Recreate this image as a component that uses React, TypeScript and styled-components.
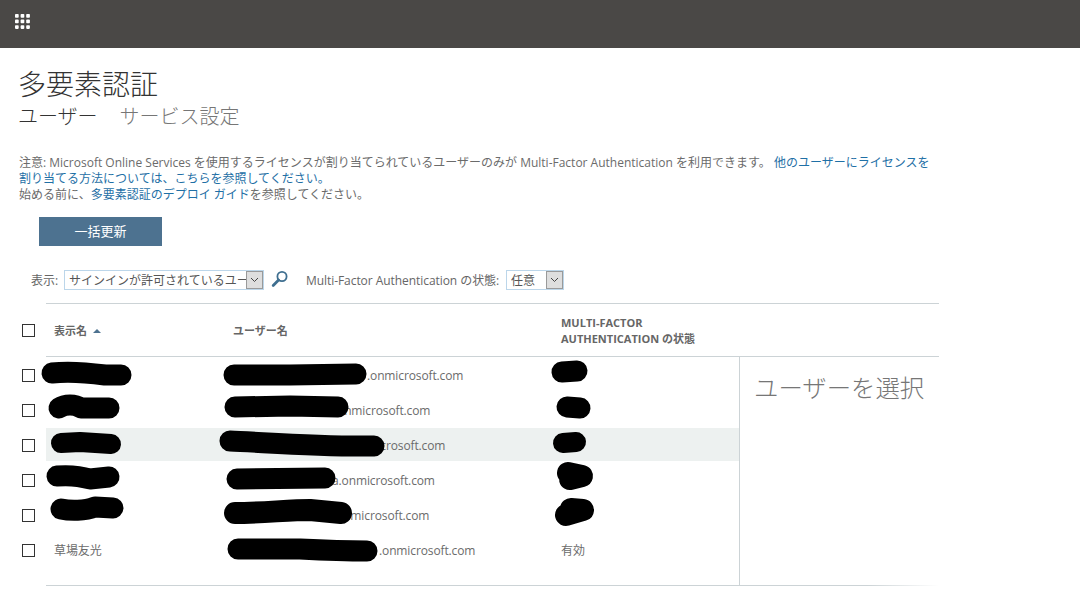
import React from "react";
import styled, { createGlobalStyle } from "styled-components";

const GlobalStyle = createGlobalStyle`
  html, body { margin: 0; padding: 0; background: #fff; overflow: hidden; }
  body { font-family: "Open Sans", "Noto Sans CJK JP", sans-serif; font-size: 12px; color: #666; }
`;

const Page = styled.div`
  position: relative;
  width: 1080px;
  height: 595px;
  overflow: hidden;
`;

const TopBar = styled.header`
  box-sizing: border-box;
  height: 48px;
  background: #4a4846;
  display: flex;
  align-items: flex-start;
  padding: 14px 0 0 15px;
`;

const Main = styled.main`
  padding: 18px 0 0 19px;
`;

const Title = styled.h1`
  margin: 0 0 0 -1px;
  font-size: 28px;
  line-height: 36px;
  font-weight: 300;
  color: #333;
`;

const Tabs = styled.nav`
  display: flex;
  gap: 22px;
  height: 28px;
  margin-left: -1px;
  padding-top: 1px;
`;

const Tab = styled.a<{ $active?: boolean }>`
  font-size: 20px;
  line-height: 28px;
  font-weight: 300;
  color: ${(p) => (p.$active ? "#333" : "#767676")};
`;

const Note = styled.div`
  margin-top: 24px;
  line-height: 16px;
  white-space: nowrap;
  color: #6b6b6b;
`;

const NoteLine = styled.div``;

const Link = styled.a`
  color: #1f70a6;
`;

const BulkButton = styled.button`
  display: block;
  margin: 14px 0 0 20px;
  width: 123px;
  height: 29px;
  border: 0;
  padding: 0 0 2px;
  background: #4d7290;
  color: #fff;
  font-family: inherit;
  font-size: 13px;
`;

const FilterRow = styled.div`
  display: flex;
  align-items: center;
  height: 20px;
  margin-top: 24px;
  padding-left: 12px;
`;

const FilterLabel = styled.span<{ $gap: number }>`
  margin-right: ${(p) => p.$gap}px;
  white-space: nowrap;
  letter-spacing: -0.06px;
`;

const Dropdown = styled.div<{ $width: number }>`
  box-sizing: border-box;
  width: ${(p) => p.$width}px;
  height: 20px;
  display: flex;
  align-items: center;
  border: 1px solid #bcd6ea;
  padding-left: 4px;
  color: #555;
  white-space: nowrap;
`;

const DropdownText = styled.span`
  flex: 1;
  min-width: 0;
  overflow: hidden;
`;

const DropdownArrow = styled.span`
  flex: none;
  box-sizing: border-box;
  width: 17px;
  height: 18px;
  display: flex;
  align-items: center;
  justify-content: center;
  background: #dedede;
  border: 1px solid #9a9a9a;
`;

const SearchButton = styled.span`
  display: flex;
  width: 18px;
  height: 18px;
  margin: -3px 17px 0 7px;
`;

const HeaderRow = styled.div`
  display: flex;
  margin-top: 13px;
`;

const CheckSlot = styled.div<{ $nudge?: boolean }>`
  flex: none;
  width: 27px;
  display: flex;
  align-items: center;
  padding-left: 3px;
  padding-top: ${(p) => (p.$nudge ? 2 : 0)}px;
  box-sizing: border-box;
`;

const Check = styled.span`
  display: block;
  box-sizing: border-box;
  width: 13px;
  height: 13px;
  border: 1px solid #333;
  background: #fff;
`;

const HeaderCells = styled.div`
  box-sizing: border-box;
  width: 893px;
  height: 54px;
  padding-top: 2px;
  display: flex;
  align-items: center;
  border-top: 1px solid #ccd3d6;
  border-bottom: 1px solid #ccd3d6;
`;

const HeaderCell = styled.div<{ $width: number }>`
  width: ${(p) => p.$width}px;
  padding-left: 8px;
  box-sizing: border-box;
  font-size: 11px;
  line-height: 16px;
  font-weight: 700;
  color: #666;
`;

const SortArrow = styled.span`
  display: inline-block;
  vertical-align: 2px;
  margin-left: 3px;
  width: 0;
  height: 0;
  border-left: 4px solid transparent;
  border-right: 4px solid transparent;
  border-bottom: 4px solid #4d7290;
`;

const Body = styled.div`
  display: flex;
  height: 228px;
`;

const RowList = styled.div`
  flex: none;
  width: 720px;
  padding-top: 1px;
  display: flex;
  flex-direction: column;
  gap: 2px;
`;

const Row = styled.div`
  display: flex;
  height: 33px;
`;

const RowCells = styled.div<{ $selected?: boolean }>`
  flex: 1;
  display: flex;
  align-items: center;
  padding-top: 2px;
  box-sizing: border-box;
  background: ${(p) => (p.$selected ? "#edf1f0" : "transparent")};
`;

const Cell = styled.div<{ $width: number; $lead?: number }>`
  width: ${(p) => p.$width}px;
  box-sizing: border-box;
  padding-left: ${(p) => 8 + (p.$lead ?? 0)}px;
  white-space: nowrap;
  line-height: 16px;
  letter-spacing: -0.12px;
  color: #6b6b6b;
`;

const DetailPane = styled.aside`
  box-sizing: border-box;
  width: 200px;
  border-left: 1px solid #ccd3d6;
  padding: 15px 0 0 14px;
  font-size: 24.4px;
  line-height: 32px;
  font-weight: 300;
  color: #767676;
`;

const BottomRule = styled.div`
  margin-left: 27px;
  width: 893px;
  height: 1px;
  background: linear-gradient(to right, #ccd3d6 92%, #fff 100%);
`;

const Redactions = styled.svg`
  position: absolute;
  inset: 0;
  pointer-events: none;
`;

const AppGrid = () => (
  <svg width="15" height="15" viewBox="0 0 15 15" fill="#fff">
    {[0, 5.6, 11.2].flatMap((y) =>
      [0, 5.6, 11.2].map((x) => <rect key={`${x}-${y}`} x={x} y={y} width="3.7" height="3.7" rx="0.8" />)
    )}
  </svg>
);

const Chevron = () => (
  <svg width="9" height="6" viewBox="0 0 9 6" fill="none" stroke="#444" strokeWidth="1">
    <path d="M1 1l3.5 3.5L8 1" />
  </svg>
);

const Lens = () => (
  <svg width="18" height="18" viewBox="0 0 18 18" fill="none" stroke="#3f6f90">
    <circle cx="11" cy="6.5" r="4.6" strokeWidth="1.8" />
    <path d="M7.6 10L2.2 15.4" strokeWidth="2.8" strokeLinecap="round" />
  </svg>
);

const strokes: Array<[string, number]> = [
  ["M52 373C70 371 90 373 105 375L121 375", 21],
  ["M59 408C65 404 75 404 81 408L109 408", 21],
  ["M61 443L80 442L111 444", 20],
  ["M57 476C70 475 80 476 90 479L109 477", 21],
  ["M61 509C70 511 85 511 95 507L113 508", 21],
  ["M234 375L290 375L356 374", 21],
  ["M235 407L290 406L338 407", 21],
  ["M230 441C260 442 320 447 374 446", 21],
  ["M237 479L325 478", 21],
  ["M235 513C260 513 290 510 310 510L341 513", 22],
  ["M238 549L300 549C320 550 340 551 367 551", 21],
  ["M562 372L577 371", 21],
  ["M567 407L580 408", 21],
  ["M563 443L576 442", 20],
  ["M568 473L582 476L570 479", 22],
  ["M571 509L583 510L566 515", 22],
];

type UserRow = { name?: string; email: string; lead: number; status?: string; selected?: boolean };

const rows: UserRow[] = [
  { email: ".onmicrosoft.com", lead: 134 },
  { email: ".onmicrosoft.com", lead: 101 },
  { email: ".onmicrosoft.com", lead: 116, selected: true },
  { email: "a.onmicrosoft.com", lead: 99 },
  { email: ".onmicrosoft.com", lead: 100 },
  { name: "草場友光", email: ".onmicrosoft.com", lead: 146, status: "有効" },
];

export default function App() {
  return (
    <Page>
      <GlobalStyle />
      <TopBar>
        <AppGrid />
      </TopBar>
      <Main>
        <Title>多要素認証</Title>
        <Tabs>
          <Tab $active>ユーザー</Tab>
          <Tab>サービス設定</Tab>
        </Tabs>
        <Note>
          <NoteLine>
            注意: Microsoft Online Services を使用するライセンスが割り当てられているユーザーのみが Multi-Factor Authentication を利用できます。 <Link>他のユーザーにライセンスを</Link>
          </NoteLine>
          <NoteLine>
            <Link>割り当てる方法については、こちらを参照してください。</Link>
          </NoteLine>
          <NoteLine>
            始める前に、<Link>多要素認証のデプロイ ガイド</Link>を参照してください。
          </NoteLine>
        </Note>
        <BulkButton>一括更新</BulkButton>
        <FilterRow>
          <FilterLabel $gap={6}>表示:</FilterLabel>
          <Dropdown $width={200}>
            <DropdownText>サインインが許可されているユーザー</DropdownText>
            <DropdownArrow>
              <Chevron />
            </DropdownArrow>
          </Dropdown>
          <SearchButton>
            <Lens />
          </SearchButton>
          <FilterLabel $gap={7}>Multi-Factor Authentication の状態:</FilterLabel>
          <Dropdown $width={58}>
            <DropdownText>任意</DropdownText>
            <DropdownArrow>
              <Chevron />
            </DropdownArrow>
          </Dropdown>
        </FilterRow>
        <HeaderRow>
          <CheckSlot>
            <Check />
          </CheckSlot>
          <HeaderCells>
            <HeaderCell $width={179}>
              表示名 <SortArrow />
            </HeaderCell>
            <HeaderCell $width={328}>ユーザー名</HeaderCell>
            <HeaderCell $width={386}>
              MULTI-FACTOR
              <br />
              AUTHENTICATION の状態
            </HeaderCell>
          </HeaderCells>
        </HeaderRow>
        <Body>
          <RowList>
            {rows.map((r, i) => (
              <Row key={i}>
                <CheckSlot $nudge>
                  <Check />
                </CheckSlot>
                <RowCells $selected={r.selected}>
                  <Cell $width={179}>{r.name}</Cell>
                  <Cell $width={328} $lead={r.lead}>
                    {r.email}
                  </Cell>
                  <Cell $width={186}>{r.status}</Cell>
                </RowCells>
              </Row>
            ))}
          </RowList>
          <DetailPane>ユーザーを選択</DetailPane>
        </Body>
        <BottomRule />
      </Main>
      <Redactions width="1080" height="595" viewBox="0 0 1080 595" fill="none" stroke="#000" strokeLinecap="round" strokeLinejoin="round">
        {strokes.map(([d, w], i) => (
          <path key={i} d={d} strokeWidth={w} />
        ))}
      </Redactions>
    </Page>
  );
}
